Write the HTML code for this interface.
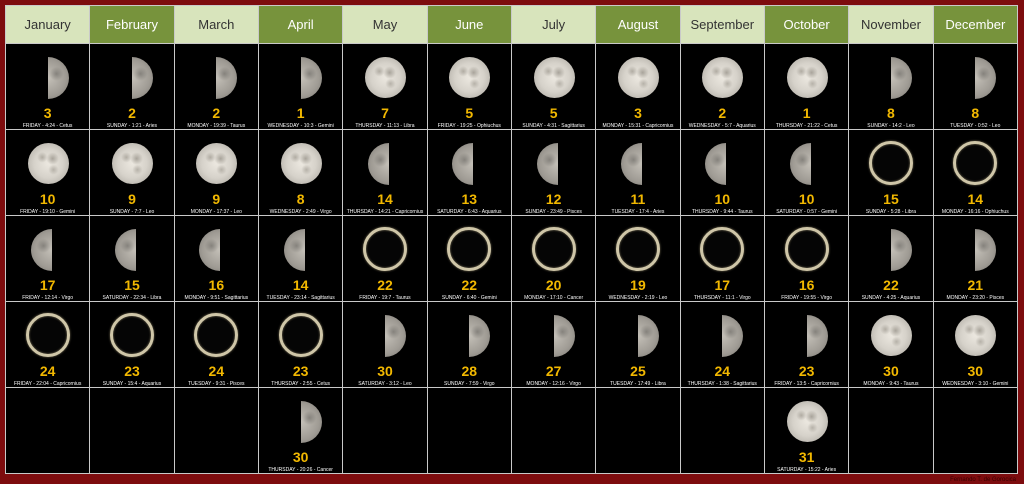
<!DOCTYPE html>
<html><head><meta charset="utf-8"><style>
body{margin:0;width:1024px;height:484px;background:#7d0c0e;position:relative;overflow:hidden;font-family:"Liberation Sans",sans-serif}
table{position:absolute;left:5px;top:5px;width:1013px;height:468px;border-collapse:collapse;table-layout:fixed;background:#000}
td,th{border:1px solid #c9c9c9;padding:0;vertical-align:top}
th{height:37px;font-weight:normal;font-size:13px;color:#333;background:#d8e4bc;vertical-align:middle}
th.g{background:#77933c;color:#fff}
td{height:85px}
.c{position:relative;height:85px}
.n{position:absolute;top:61px;left:0;right:0;text-align:center;color:#f2b800;font-weight:bold;font-size:14px}
.l{position:absolute;top:79px;left:0;right:0;text-align:center;color:#fff;font-size:5px;white-space:nowrap}
.m{position:absolute;top:13px;left:50%}
.fm{width:41px;height:41px;margin-left:-20px;border-radius:50%;background:
radial-gradient(circle at 60% 38%,rgba(120,115,105,.55) 0,rgba(120,115,105,0) 18%),
radial-gradient(circle at 35% 35%,rgba(130,125,115,.5) 0,rgba(130,125,115,0) 14%),
radial-gradient(circle at 62% 65%,rgba(130,125,115,.45) 0,rgba(130,125,115,0) 14%),
radial-gradient(circle at 50% 50%,#ece8e0 0,#d6d2ca 50%,#b3afa7 85%,#8a867f 100%)}
.fq{width:21px;height:42px;margin-left:0;border-radius:0 21px 21px 0;background:
radial-gradient(circle at 40% 40%,rgba(90,88,84,.5) 0,rgba(90,88,84,0) 25%),
radial-gradient(circle at 0 50%,#c4c0b8 0,#9f9b94 60%,#74716b 100%)}
.lq{width:21px;height:42px;margin-left:-17px;border-radius:21px 0 0 21px;background:
radial-gradient(circle at 60% 40%,rgba(90,88,84,.5) 0,rgba(90,88,84,0) 25%),
radial-gradient(circle at 100% 50%,#c4c0b8 0,#9f9b94 60%,#74716b 100%)}
.nm{width:38px;height:38px;top:11px;margin-left:-22px;border-radius:50%;border:3px solid #cfc6a8;box-shadow:0 0 2px #7a7157,inset 0 0 2px #7a7157;background:#050505}
.sig{position:absolute;right:8px;bottom:1px;font-size:6px;color:#3a0000}
</style></head><body>
<table>
<tr><th>January</th><th class="g">February</th><th>March</th><th class="g">April</th><th>May</th><th class="g">June</th><th>July</th><th class="g">August</th><th>September</th><th class="g">October</th><th>November</th><th class="g">December</th></tr>
<tr>
<td><div class="c"><div class="m fq"></div><div class="n">3</div><div class="l">FRIDAY - 4:24 - Cetus</div></div></td>
<td><div class="c"><div class="m fq"></div><div class="n">2</div><div class="l">SUNDAY - 1:21 - Aries</div></div></td>
<td><div class="c"><div class="m fq"></div><div class="n">2</div><div class="l">MONDAY - 19:39 - Taurus</div></div></td>
<td><div class="c"><div class="m fq"></div><div class="n">1</div><div class="l">WEDNESDAY - 10:3 - Gemini</div></div></td>
<td><div class="c"><div class="m fm"></div><div class="n">7</div><div class="l">THURSDAY - 11:13 - Libra</div></div></td>
<td><div class="c"><div class="m fm"></div><div class="n">5</div><div class="l">FRIDAY - 19:25 - Ophiuchus</div></div></td>
<td><div class="c"><div class="m fm"></div><div class="n">5</div><div class="l">SUNDAY - 4:31 - Sagittarius</div></div></td>
<td><div class="c"><div class="m fm"></div><div class="n">3</div><div class="l">MONDAY - 15:31 - Capricornius</div></div></td>
<td><div class="c"><div class="m fm"></div><div class="n">2</div><div class="l">WEDNESDAY - 5:7 - Aquarius</div></div></td>
<td><div class="c"><div class="m fm"></div><div class="n">1</div><div class="l">THURSDAY - 21:22 - Cetus</div></div></td>
<td><div class="c"><div class="m fq"></div><div class="n">8</div><div class="l">SUNDAY - 14:2 - Leo</div></div></td>
<td><div class="c"><div class="m fq"></div><div class="n">8</div><div class="l">TUESDAY - 0:52 - Leo</div></div></td>
</tr>
<tr>
<td><div class="c"><div class="m fm"></div><div class="n">10</div><div class="l">FRIDAY - 19:10 - Gemini</div></div></td>
<td><div class="c"><div class="m fm"></div><div class="n">9</div><div class="l">SUNDAY - 7:7 - Leo</div></div></td>
<td><div class="c"><div class="m fm"></div><div class="n">9</div><div class="l">MONDAY - 17:37 - Leo</div></div></td>
<td><div class="c"><div class="m fm"></div><div class="n">8</div><div class="l">WEDNESDAY - 2:49 - Virgo</div></div></td>
<td><div class="c"><div class="m lq"></div><div class="n">14</div><div class="l">THURSDAY - 14:21 - Capricornius</div></div></td>
<td><div class="c"><div class="m lq"></div><div class="n">13</div><div class="l">SATURDAY - 6:43 - Aquarius</div></div></td>
<td><div class="c"><div class="m lq"></div><div class="n">12</div><div class="l">SUNDAY - 23:49 - Pisces</div></div></td>
<td><div class="c"><div class="m lq"></div><div class="n">11</div><div class="l">TUESDAY - 17:4 - Aries</div></div></td>
<td><div class="c"><div class="m lq"></div><div class="n">10</div><div class="l">THURSDAY - 9:44 - Taurus</div></div></td>
<td><div class="c"><div class="m lq"></div><div class="n">10</div><div class="l">SATURDAY - 0:57 - Gemini</div></div></td>
<td><div class="c"><div class="m nm"></div><div class="n">15</div><div class="l">SUNDAY - 5:28 - Libra</div></div></td>
<td><div class="c"><div class="m nm"></div><div class="n">14</div><div class="l">MONDAY - 16:16 - Ophiuchus</div></div></td>
</tr>
<tr>
<td><div class="c"><div class="m lq"></div><div class="n">17</div><div class="l">FRIDAY - 12:14 - Virgo</div></div></td>
<td><div class="c"><div class="m lq"></div><div class="n">15</div><div class="l">SATURDAY - 22:34 - Libra</div></div></td>
<td><div class="c"><div class="m lq"></div><div class="n">16</div><div class="l">MONDAY - 9:51 - Sagittarius</div></div></td>
<td><div class="c"><div class="m lq"></div><div class="n">14</div><div class="l">TUESDAY - 23:14 - Sagittarius</div></div></td>
<td><div class="c"><div class="m nm"></div><div class="n">22</div><div class="l">FRIDAY - 19:7 - Taurus</div></div></td>
<td><div class="c"><div class="m nm"></div><div class="n">22</div><div class="l">SUNDAY - 6:40 - Gemini</div></div></td>
<td><div class="c"><div class="m nm"></div><div class="n">20</div><div class="l">MONDAY - 17:10 - Cancer</div></div></td>
<td><div class="c"><div class="m nm"></div><div class="n">19</div><div class="l">WEDNESDAY - 2:19 - Leo</div></div></td>
<td><div class="c"><div class="m nm"></div><div class="n">17</div><div class="l">THURSDAY - 11:1 - Virgo</div></div></td>
<td><div class="c"><div class="m nm"></div><div class="n">16</div><div class="l">FRIDAY - 19:55 - Virgo</div></div></td>
<td><div class="c"><div class="m fq"></div><div class="n">22</div><div class="l">SUNDAY - 4:25 - Aquarius</div></div></td>
<td><div class="c"><div class="m fq"></div><div class="n">21</div><div class="l">MONDAY - 23:20 - Pisces</div></div></td>
</tr>
<tr>
<td><div class="c"><div class="m nm"></div><div class="n">24</div><div class="l">FRIDAY - 22:04 - Capricornius</div></div></td>
<td><div class="c"><div class="m nm"></div><div class="n">23</div><div class="l">SUNDAY - 15:4 - Aquarius</div></div></td>
<td><div class="c"><div class="m nm"></div><div class="n">24</div><div class="l">TUESDAY - 9:31 - Pisces</div></div></td>
<td><div class="c"><div class="m nm"></div><div class="n">23</div><div class="l">THURSDAY - 2:55 - Cetus</div></div></td>
<td><div class="c"><div class="m fq"></div><div class="n">30</div><div class="l">SATURDAY - 3:12 - Leo</div></div></td>
<td><div class="c"><div class="m fq"></div><div class="n">28</div><div class="l">SUNDAY - 7:59 - Virgo</div></div></td>
<td><div class="c"><div class="m fq"></div><div class="n">27</div><div class="l">MONDAY - 12:16 - Virgo</div></div></td>
<td><div class="c"><div class="m fq"></div><div class="n">25</div><div class="l">TUESDAY - 17:49 - Libra</div></div></td>
<td><div class="c"><div class="m fq"></div><div class="n">24</div><div class="l">THURSDAY - 1:38 - Sagittarius</div></div></td>
<td><div class="c"><div class="m fq"></div><div class="n">23</div><div class="l">FRIDAY - 13:5 - Capricornius</div></div></td>
<td><div class="c"><div class="m fm"></div><div class="n">30</div><div class="l">MONDAY - 9:43 - Taurus</div></div></td>
<td><div class="c"><div class="m fm"></div><div class="n">30</div><div class="l">WEDNESDAY - 3:10 - Gemini</div></div></td>
</tr>
<tr>
<td></td><td></td><td></td>
<td><div class="c"><div class="m fq"></div><div class="n">30</div><div class="l">THURSDAY - 20:26 - Cancer</div></div></td>
<td></td><td></td><td></td><td></td><td></td>
<td><div class="c"><div class="m fm"></div><div class="n">31</div><div class="l">SATURDAY - 15:22 - Aries</div></div></td>
<td></td><td></td>
</tr>
</table>
<div class="sig">Fernando T. de Gorocica</div>
</body></html>
